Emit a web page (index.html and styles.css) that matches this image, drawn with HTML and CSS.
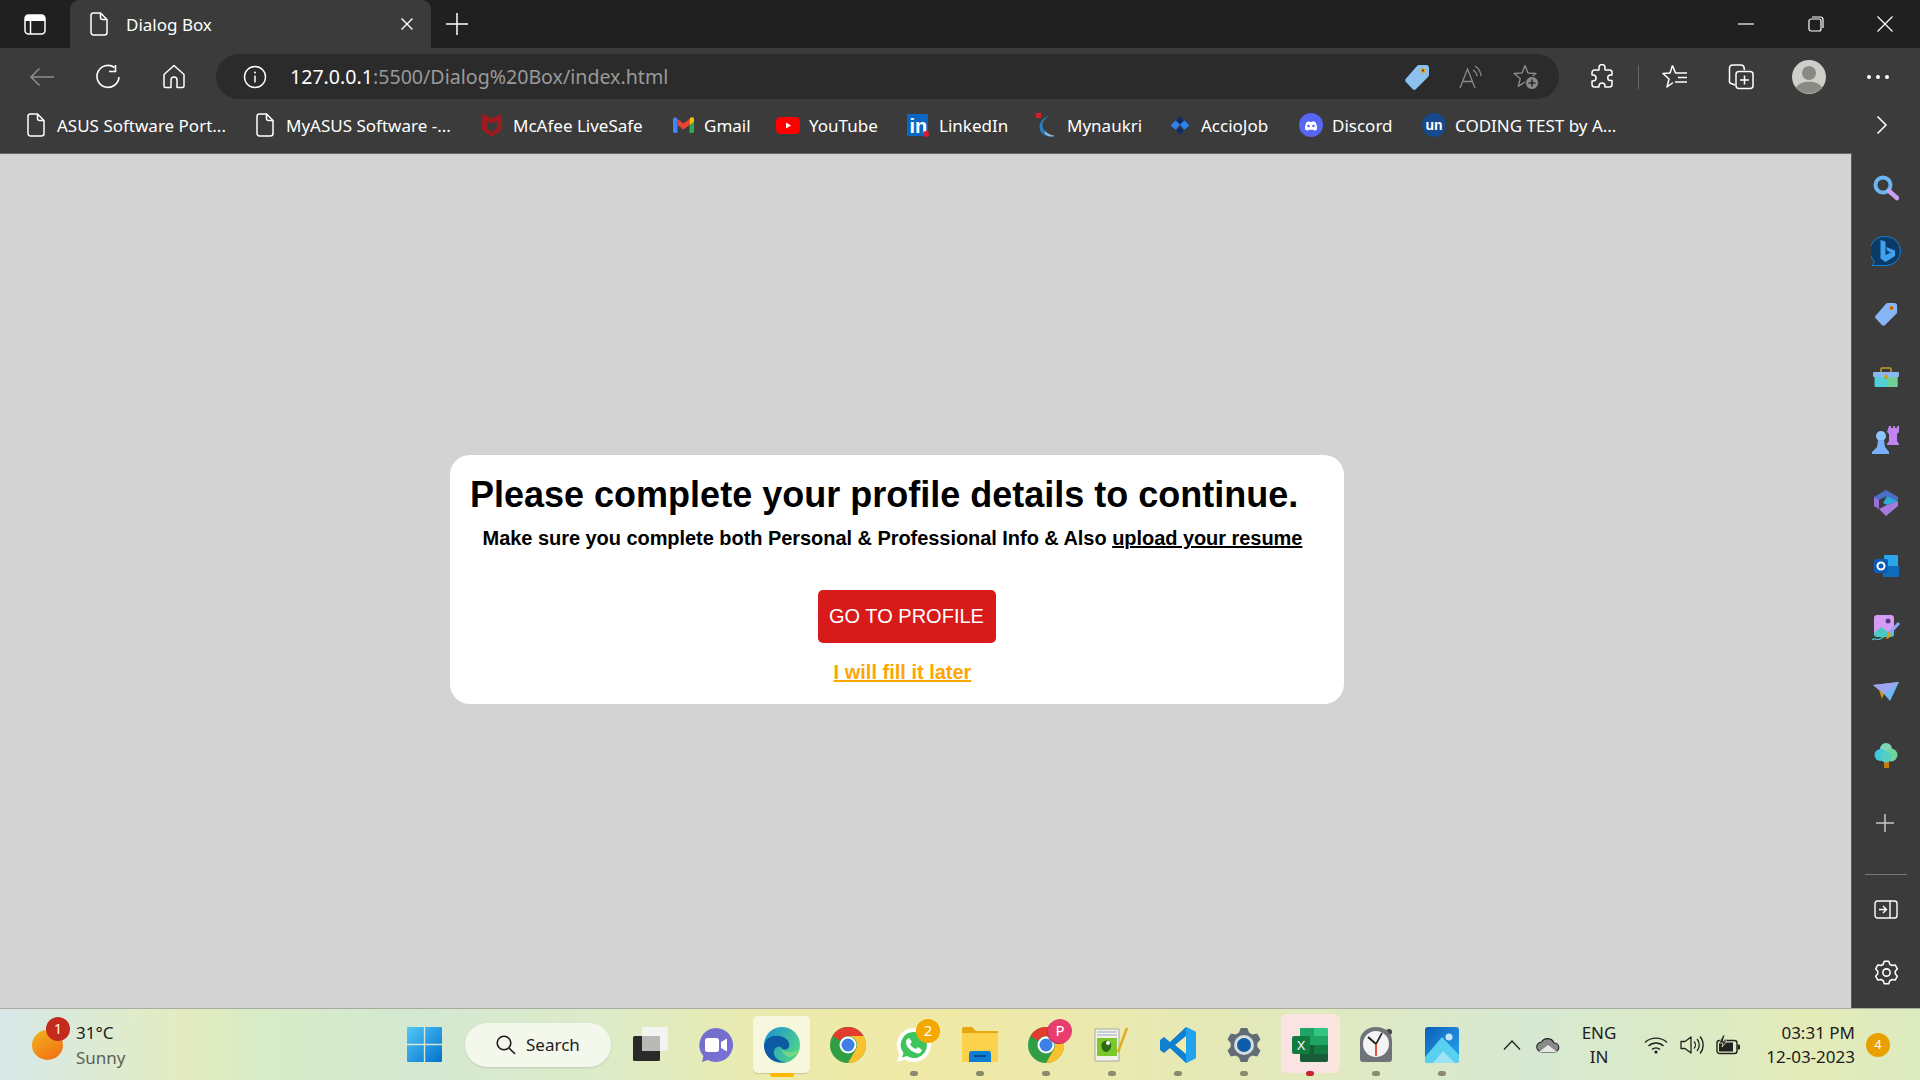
FILE: index.html
```html
<!DOCTYPE html>
<html>
<head>
    <title>Dialog Box</title>
    <meta charset="UTF-8">
    <link rel="stylesheet" href="styles.css">
</head>
<body>

<svg class="sprite">
    <symbol id="doc" viewBox="0 0 18 24"><path d="M3 1h7.5L17 7.5V20.500a2.500 2.500 0 0 1-2.500 2.500h-11A2.500 2.500 0 0 1 1 20.500v-17A2.500 2.500 0 0 1 3 1zM10.500 1v4.500a2 2 0 0 0 2 2H17" fill="none" stroke="currentColor" stroke-width="1.500"/></symbol>
    <symbol id="gear" viewBox="0 0 24 24"><polygon points="8.82,4.12 9.9,1.2 14.1,1.2 15.18,4.12 17.23,5.3 20.3,4.78 22.4,8.42 20.42,10.82 20.42,13.18 22.4,15.58 20.3,19.22 17.23,18.7 15.18,19.88 14.1,22.8 9.9,22.8 8.82,19.88 6.77,18.7 3.7,19.22 1.6,15.58 3.58,13.18 3.58,10.82 1.6,8.42 3.7,4.78 6.77,5.3"/><circle cx="12" cy="12" r="3.500"/></symbol>
    <symbol id="chrome" viewBox="0 0 36 36">
        <circle cx="18" cy="18" r="18" fill="#2f9e44"/>
        <path d="M2.400 9A18 18 0 0 1 33.600 9H18a9 9 0 0 0-7.800 4.500z" fill="#e33b2e"/>
        <path d="M33.600 9A18 18 0 0 1 18 36l7.800-13.500A9 9 0 0 0 25.800 13.500 9 9 0 0 0 18 9z" fill="#fbc02d"/>
        <circle cx="18" cy="18" r="8.500" fill="#fff"/>
        <circle cx="18" cy="18" r="6.500" fill="#3f7fe8"/>
    </symbol>
</svg>

<header class="chrome">
    <div class="tabstrip">
        <div class="tabs-btn">
            <svg width="22" height="21" viewBox="0 0 22 21"><rect x="1" y="1" width="20" height="19" rx="3.500" fill="none" stroke="#fff" stroke-width="1.500"/><path d="M1 4a3 3 0 0 1 3-3h14a3 3 0 0 1 3 3v3H1z" fill="#fff"/><path d="M6.500 7v13" stroke="#fff" stroke-width="1.500"/></svg>
        </div>
        <div class="tab">
            <svg class="tab-doc" width="18" height="24"><use href="#doc"/></svg>
            <span class="tab-title">Dialog Box</span>
            <svg class="tab-close" width="14" height="14" viewBox="0 0 14 14"><path d="M1.500 1.500l11 11M12.500 1.500l-11 11" stroke="#fff" stroke-width="1.400"/></svg>
        </div>
        <div class="new-tab">
            <svg width="22" height="22" viewBox="0 0 22 22"><path d="M11 0v22M0 11h22" stroke="#fff" stroke-width="1.500"/></svg>
        </div>
        <div class="win-btns">
            <div class="win-btn"><svg width="16" height="2" viewBox="0 0 16 2"><path d="M0 1h16" stroke="#fff" stroke-width="1.200"/></svg></div>
            <div class="win-btn"><svg width="16" height="16" viewBox="0 0 16 16"><rect x="1" y="3" width="12" height="12" rx="2" fill="none" stroke="#fff" stroke-width="1.200"/><path d="M4 1h8.500A2.500 2.500 0 0 1 15 3.500V12" fill="none" stroke="#fff" stroke-width="1.200"/></svg></div>
            <div class="win-btn"><svg width="16" height="16" viewBox="0 0 16 16"><path d="M.5.500l15 15M15.500.500l-15 15" stroke="#fff" stroke-width="1.200"/></svg></div>
        </div>
    </div>

    <div class="toolbar">
        <div class="tool dim"><svg width="26" height="20" viewBox="0 0 26 20"><path d="M25 10H2M10.500 1.500L2 10l8.500 8.500" fill="none" stroke="currentColor" stroke-width="1.500"/></svg></div>
        <div class="tool"><svg width="26" height="26" viewBox="0 0 26 26"><path d="M19.500 3.500A11 11 0 1 0 24 13" fill="none" stroke="currentColor" stroke-width="1.600"/><path d="M20.500 1v6.500H14" fill="none" stroke="currentColor" stroke-width="1.600"/></svg></div>
        <div class="tool"><svg width="24" height="25" viewBox="0 0 24 25"><path d="M12 1.500L2 10.500V22a1.500 1.500 0 0 0 1.500 1.500H9V16a3 3 0 0 1 6 0v7.500h5.500A1.500 1.500 0 0 0 22 22V10.500z" fill="none" stroke="currentColor" stroke-width="1.500" stroke-linejoin="round"/></svg></div>

        <div class="addr">
            <svg class="addr-info" width="24" height="24" viewBox="0 0 24 24"><circle cx="12" cy="12" r="10.500" fill="none" stroke="#fff" stroke-width="1.400"/><path d="M12 10.500v7" stroke="#fff" stroke-width="1.500"/><circle cx="12" cy="7.500" r="1" fill="#fff"/></svg>
            <span class="url"><b>127.0.0.1</b>:5500/Dialog%20Box/index.html</span>
            <div class="addr-icons">
                <div class="addr-icon"><svg width="24" height="26" viewBox="0 0 24 26"><path d="M14 1h7a3 3 0 0 1 3 3v7a3 3 0 0 1-1 2L11 25a2.500 2.500 0 0 1-3.500 0L1 18a2.500 2.500 0 0 1 0-3.500L12 2a3 3 0 0 1 2-1z" fill="#8cc1ee"/><circle cx="18" cy="6.500" r="2.500" fill="#e8a317"/><circle cx="18" cy="6.500" r="1" fill="#333"/></svg></div>
                <div class="addr-icon muted"><svg width="24" height="24" viewBox="0 0 24 24"><path d="M1 23L8.500 4l7.500 19M3.500 16.500h10" fill="none" stroke="currentColor" stroke-width="1.300"/><path d="M14 5a8 8 0 0 1 4 6M16 1a13 13 0 0 1 6 10" fill="none" stroke="currentColor" stroke-width="1.300"/></svg></div>
                <div class="addr-icon muted"><svg width="26" height="26" viewBox="0 0 26 26"><polygon points="12,1.500 14.940,8.950 22.940,9.450 16.760,14.550 18.760,22.300 12,18 5.240,22.300 7.240,14.550 1.060,9.450 9.060,8.950" fill="none" stroke="currentColor" stroke-width="1.400" stroke-linejoin="round"/><circle cx="19" cy="19" r="6.500" fill="#8a8a8a" stroke="#2b2b2b" stroke-width="1"/><path d="M19 15.500v7M15.500 19h7" stroke="#2b2b2b" stroke-width="1.600"/></svg></div>
            </div>
        </div>

        <div class="tool puzzle"><svg width="24" height="26" viewBox="0 0 24 26"><path d="M9 3.500a3 3 0 0 1 6 0V6h4.500A2.500 2.500 0 0 1 22 8.500V11h-1.500a2.500 2.500 0 0 0 0 5.500H22v4a2.500 2.500 0 0 1-2.500 2.500H15v-1a3 3 0 0 0-6 0v1H4.500A2.500 2.500 0 0 1 2 20.500V17h1a3 3 0 0 0 0-6H2V8.500A2.500 2.500 0 0 1 4.500 6H9z" fill="none" stroke="currentColor" stroke-width="1.500" stroke-linejoin="round"/></svg></div>
        <div class="sep"></div>
        <div class="tool"><svg width="26" height="25" viewBox="0 0 26 25"><path d="M10.500 1.500L13.500 9H25M16 13.500h9M13 18h12M11 18.500L5 23l2-8L1 9.500l7-.5 2.500-7.500" fill="none" stroke="currentColor" stroke-width="1.500" stroke-linejoin="round"/></svg></div>
        <div class="tool"><svg width="26" height="27" viewBox="0 0 26 27"><path d="M7 22L3 20.500a2.500 2.500 0 0 1-1.500-3L1.500 5A3 3 0 0 1 4.500 2H13a3 3 0 0 1 3 2.500L16.500 7" fill="none" stroke="currentColor" stroke-width="1.500"/><rect x="8" y="8.500" width="17" height="17" rx="3" fill="#3b3b3b" stroke="currentColor" stroke-width="1.500"/><path d="M16.500 12.500v9M12 17h9" stroke="currentColor" stroke-width="1.500"/></svg></div>
        <div class="tool avatar-wrap">
            <svg width="34" height="34" viewBox="0 0 34 34"><circle cx="17" cy="17" r="17" fill="#cfcec8"/><circle cx="17" cy="13" r="7" fill="#8a8a84"/><path d="M4 27.500a14 9 0 0 1 26 0A17 17 0 0 1 4 27.500z" fill="#8a8a84"/></svg>
        </div>
        <div class="tool dots"><span></span><span></span><span></span></div>
    </div>

    <div class="bookmarks">
        <div class="bm"><span class="bm-icon"><svg width="18" height="24"><use href="#doc"/></svg></span>ASUS Software Port...</div>
        <div class="bm"><span class="bm-icon"><svg width="18" height="24"><use href="#doc"/></svg></span>MyASUS Software -...</div>
        <div class="bm"><span class="bm-icon"><svg width="22" height="24" viewBox="0 0 22 24"><path d="M1 1l10 4 10-4v16l-10 7-10-7z" fill="#9c1b1f"/><path d="M6 8.500l5 2 5-2v7l-5 3.500-5-3.500z" fill="#3b3b3b"/></svg></span>McAfee LiveSafe</div>
        <div class="bm"><span class="bm-icon"><svg width="21" height="16" viewBox="0 0 21 16"><path d="M0 2.500A2 2 0 0 1 3.500 1L4.500 2v14H1.500A1.500 1.500 0 0 1 0 14.500z" fill="#4285f4"/><path d="M21 2.500A2 2 0 0 0 17.500 1l-1 1v14h3a1.500 1.500 0 0 0 1.500-1.500z" fill="#34a853"/><path d="M16.500 2v6l4.500-3.500v-2A2 2 0 0 0 17.500 1z" fill="#fbbc04"/><path d="M4.500 2L10.500 6.500 16.500 2v6l-6 4.500-6-4.500z" fill="#ea4335"/></svg></span>Gmail</div>
        <div class="bm"><span class="bm-icon"><svg width="24" height="17" viewBox="0 0 24 17"><rect width="24" height="17" rx="4.500" fill="#f00"/><path d="M10 5.500v6l5-3z" fill="#fff"/></svg></span>YouTube</div>
        <div class="bm"><span class="bm-icon"><svg width="22" height="23" viewBox="0 0 22 23"><rect width="21" height="22" fill="#0a66c2"/><text class="li-text" x="2.500" y="19">in</text><circle cx="19" cy="20" r="3" fill="#d3202a"/></svg></span>LinkedIn</div>
        <div class="bm"><span class="bm-icon"><svg width="22" height="24" viewBox="0 0 22 24"><path d="M15 2C8 6 5 13 10 18c3 3 6 4 10 5-7 2-13-1-15-6C3 11 8 4 15 2z" fill="#2a7fc0"/><path d="M10 18c3 3 6 4 10 5-4 1-7 .5-10-2z" fill="#9fb6c8"/><rect x="1" y="0" width="5" height="5" fill="#d3202a"/></svg></span>Mynaukri</div>
        <div class="bm"><span class="bm-icon"><svg width="22" height="19" viewBox="0 0 22 22"><path d="M11 0l4.500 5L11 10 6.500 5z" fill="#0c2c66"/><path d="M6 5l5 5-5 6-6-5z" fill="#2f80ed"/><path d="M16 5l6 6-6 5-5-6z" fill="#2f80ed"/><path d="M11 12l4 5-4 5-4-5z" fill="#0c2c66"/></svg></span>AccioJob</div>
        <div class="bm"><span class="bm-icon"><svg width="24" height="24" viewBox="0 0 24 24"><circle cx="12" cy="12" r="12" fill="#5865f2"/><path d="M6 16.500c-.3-3 .5-5.500 1.800-7.500 1-.5 2-.8 2.700-.8l.4.800h2.200l.4-.8c.7 0 1.700.3 2.700.8 1.300 2 2.100 4.500 1.800 7.500-1 .7-2 1.100-2.800 1.300l-.7-1.100h-4.900l-.7 1.100C8 17.600 7 17.200 6 16.500z" fill="#fff"/><circle cx="9.500" cy="13" r="1.300" fill="#5865f2"/><circle cx="14.500" cy="13" r="1.300" fill="#5865f2"/></svg></span>Discord</div>
        <div class="bm"><span class="bm-icon"><svg width="24" height="24" viewBox="0 0 24 24"><circle cx="12" cy="12" r="12" fill="#174a8c"/><text class="un-text" x="12" y="17" text-anchor="middle">un</text></svg></span>CODING TEST by A...</div>
        <div class="bm-more"><svg width="12" height="20" viewBox="0 0 12 20"><path d="M1.500 1.500L10 10l-8.500 8.500" fill="none" stroke="#fff" stroke-width="1.500"/></svg></div>
    </div>
</header>

<div class="middle">
    <main class="page">
        <div class="dialog">
            <h1>Please complete your profile details to continue.</h1>
            <p class="dialog-sub">Make sure you complete both Personal &amp; Professional Info &amp; Also <a href="#">upload your resume</a></p>
            <div class="dialog-actions">
                <button class="profile-btn">GO TO PROFILE</button>
            </div>
            <a class="later" href="#">I will fill it later</a>
        </div>
    </main>

    <aside class="sidebar">
        <div class="side-item"><svg width="26" height="26" viewBox="0 0 26 26"><circle cx="10" cy="10" r="7.500" fill="none" stroke="#6db5f0" stroke-width="4"/><path d="M16 16l8 7" stroke="#c9a2ef" stroke-width="4.500" stroke-linecap="round"/></svg></div>
        <div class="side-item"><svg width="30" height="30" viewBox="0 0 30 30"><path d="M15 .500a14.500 14.500 0 1 1 0 29H1l2.500-4A14.500 14.500 0 0 1 15 .500z" fill="#0b3a66" stroke="#1580d8" stroke-width="1"/><path d="M9.500 4l5 1.500V19l5.500-2.500-3.500-1.500-1.500-4 9 3.500v5.500L14.500 26l-5-3.500z" fill="#3da3f0"/></svg></div>
        <div class="side-item"><svg width="24" height="24" viewBox="0 0 24 26"><path d="M14 1h7a3 3 0 0 1 3 3v7a3 3 0 0 1-1 2L11 25a2.500 2.500 0 0 1-3.500 0L1 18a2.500 2.500 0 0 1 0-3.500L12 2a3 3 0 0 1 2-1z" fill="#86b6f5"/><circle cx="18" cy="6.500" r="2.500" fill="#e8930c"/><circle cx="18" cy="6.500" r="1" fill="#333"/></svg></div>
        <div class="side-item"><svg width="26" height="20" viewBox="0 0 26 20"><path d="M8 5V2a1 1 0 0 1 1-1h8a1 1 0 0 1 1 1v3" fill="none" stroke="#c39a2a" stroke-width="1.500"/><rect x="1.500" y="7" width="23" height="13" rx="1" fill="#52cfd6"/><rect x="14" y="10" width="10.500" height="10" fill="#6fcf97"/><rect y="5" width="26" height="5" rx="1" fill="#8ab8f0"/><rect x="11.500" y="8" width="3" height="4" fill="#d59a10"/></svg></div>
        <div class="side-item"><svg width="28" height="30" viewBox="0 0 28 30"><path d="M17 1h2v2h2V1h2v2h2V1h2v6l-2 2v7l2 3v1H15v-1l2-3V9l-2-2z" fill="#c084f0"/><circle cx="9" cy="11" r="5" fill="#8ec5fc"/><path d="M6 15h6l1 7 4 5v2H0v-2l5-5z" fill="#7ab0fa"/></svg></div>
        <div class="side-item"><svg width="24" height="26" viewBox="0 0 24 26"><path d="M12 0L24 7v4L13 6 5 10v9L0 16V7z" fill="#4a6fc8"/><path d="M0 7l5 3v9l-5-3z" fill="#9b6fd8"/><path d="M5 19l8-4 11-4v5l-12 10z" fill="#a678e0"/><path d="M13 6l11 5-11 4-4-2z" fill="#2ea8d8"/></svg></div>
        <div class="side-item"><svg width="25" height="24" viewBox="0 0 25 24"><rect x="10" y="1" width="14" height="14" rx="1" fill="#28a8ea"/><path d="M8 12h17v10a1 1 0 0 1-1 1H9z" fill="#0f6cbd"/><rect y="5" width="14" height="14" rx="1.500" fill="#0a5cb5"/><circle cx="7" cy="12" r="3.500" fill="none" stroke="#fff" stroke-width="2"/></svg></div>
        <div class="side-item"><svg width="28" height="28" viewBox="0 0 28 28"><rect x="2" y="0" width="20" height="21" rx="3" fill="#d69cf5"/><path d="M2 18l7-6 7 5 6-3v5a3 3 0 0 1-3 3H5a3 3 0 0 1-3-3z" fill="#49c9c0"/><circle cx="16" cy="6" r="2.500" fill="#5b3a85"/><path d="M26 7l2 2-9 10-3-2z" fill="#8fa4f5"/><path d="M16 17l3 2-2 4-3 1z" fill="#e39a20"/><path d="M0 25c3-3 5 1 8-1s2-2 4-1" fill="none" stroke="#49c9c0" stroke-width="1.200"/></svg></div>
        <div class="side-item"><svg width="26" height="20" viewBox="0 0 26 20"><path d="M0 3l26-3-9 19-6-7z" fill="#6db7f5"/><path d="M0 3l26-3-15 12z" fill="#9da5ee"/><path d="M0 3l11 9-2 5-3-9z" fill="#d5930f"/></svg></div>
        <div class="side-item"><svg width="24" height="26" viewBox="0 0 24 26"><rect x="10" y="19" width="5" height="7" fill="#c77a12"/><circle cx="12" cy="7" r="6" fill="#7fd8b8"/><circle cx="6.500" cy="13" r="6" fill="#3fc9dc"/><circle cx="17" cy="13" r="6.500" fill="#6fd49b"/><circle cx="12" cy="15" r="5.500" fill="#55cfc2"/></svg></div>
        <div class="side-item side-plus"><svg width="18" height="18" viewBox="0 0 18 18"><path d="M9 0v18M0 9h18" stroke="#c8c8c8" stroke-width="1.500"/></svg></div>
        <div class="side-bottom">
            <div class="side-line"></div>
            <div class="side-item"><svg width="24" height="19" viewBox="0 0 24 19"><rect x="1" y="1" width="22" height="17" rx="2.500" fill="none" stroke="#fff" stroke-width="1.400"/><path d="M16 1v17" stroke="#fff" stroke-width="1.400"/><path d="M5 9.500h7M9 6l3.500 3.500L9 13" fill="none" stroke="#fff" stroke-width="1.400"/></svg></div>
            <div class="side-item"><svg class="side-gear" width="25" height="25"><use href="#gear"/></svg></div>
        </div>
    </aside>
</div>

<footer class="taskbar">
    <div class="weather">
        <span class="sun"></span>
        <span class="weather-badge">1</span>
        <div class="weather-text">
            <span>31°C</span>
            <span class="weather-sub">Sunny</span>
        </div>
    </div>

    <div class="apps">
        <div class="app">
            <svg width="35" height="35" viewBox="0 0 35 35"><defs><linearGradient id="winA" x1="0" y1="0" x2="1" y2="1"><stop offset="0" stop-color="#52c8f8"/><stop offset="1" stop-color="#0470cc"/></linearGradient></defs><path d="M0 1a1 1 0 0 1 1-1h15.800v16.800H0zM18.200 0H34a1 1 0 0 1 1 1v15.800H18.200zM0 18.200h16.800V35H1a1 1 0 0 1-1-1zM18.200 18.200H35V34a1 1 0 0 1-1 1H18.200z" fill="url(#winA)"/></svg>
        </div>
        <div class="search">
            <svg width="20" height="20" viewBox="0 0 20 20"><circle cx="8" cy="8" r="6.800" fill="none" stroke="#1a1a1a" stroke-width="1.600"/><path d="M13 13l6 6" stroke="#1a1a1a" stroke-width="1.600"/></svg>
            <span>Search</span>
        </div>
        <div class="app">
            <svg width="35" height="35" viewBox="0 0 35 35"><rect x="0" y="9" width="27" height="25" rx="1.500" fill="#2a2a2a"/><rect x="9" y="0" width="26" height="24" rx="1" fill="#f3f3f0"/><rect x="9" y="9" width="18" height="15" fill="#b9b9b6"/></svg>
        </div>
        <div class="app">
            <svg width="36" height="36" viewBox="0 0 36 36"><defs><linearGradient id="teamsA" x1="0" y1="0" x2="1" y2="1"><stop offset="0" stop-color="#6f70c8"/><stop offset="1" stop-color="#7b6fd8"/></linearGradient></defs><path d="M18 1a17 17 0 1 1-8 32l-6 2 1.500-6A17 17 0 0 1 18 1z" fill="url(#teamsA)"/><rect x="7" y="11" width="14" height="14" rx="2.500" fill="#fff"/><path d="M23 15l6-3.500v13L23 21z" fill="#fff"/></svg>
        </div>
        <div class="app app-active">
            <svg width="36" height="36" viewBox="0 0 36 36"><defs><linearGradient id="edgeA" x1="0" y1="0" x2="1" y2=".6"><stop offset="0" stop-color="#1a8fd8"/><stop offset="1" stop-color="#4fd28a"/></linearGradient></defs><circle cx="18" cy="18" r="18" fill="url(#edgeA)"/><path d="M0 18C2 9 12 7 19 10c7 3 8 10 4 12-3 1.500-6 0-6-2-6-2-10 5-5 11 3 3 7 4 10 4C8 37 0 29 0 18z" fill="#0c59a4"/><path d="M36 20c0 3-4 5-9 5-6 0-10-3-10-5 0 5 4 9 8 10 6-1 11-5 11-10z" fill="#b5e86a" opacity=".4"/></svg>
            <span class="bar"></span>
        </div>
        <div class="app"><svg width="36" height="36"><use href="#chrome"/></svg></div>
        <div class="app">
            <svg width="36" height="36" viewBox="0 0 36 36"><path d="M18 1a17 17 0 1 1-9 31.500L1 35l2.500-8A17 17 0 0 1 18 1z" fill="#fff"/><path d="M18 5a13 13 0 1 1-7 24l-5 1.500L7.500 26A13 13 0 0 1 18 5z" fill="#3fc45c"/><path d="M13 11l3 4-2 2c1 2 3 4 6 5l2-2 4 3c-1 3-3 4-6 3-6-2-10-7-10-11 0-2 1-3 3-4z" fill="#fff"/></svg>
            <span class="badge badge-orange">2</span>
            <span class="dot"></span>
        </div>
        <div class="app">
            <svg width="36" height="35" viewBox="0 0 36 35"><path d="M0 2a2 2 0 0 1 2-2h8l4 4h22v31H0z" fill="#e8a80c"/><path d="M0 6h36v29H0z" fill="#fcd14c"/><path d="M7 35V27a3 3 0 0 1 3-3h16a3 3 0 0 1 3 3v8z" fill="#0d7ed4"/><rect x="12" y="28" width="12" height="2" fill="#0a4e90"/></svg>
            <span class="dot"></span>
        </div>
        <div class="app">
            <svg width="36" height="36"><use href="#chrome"/></svg>
            <span class="badge badge-pink">P</span>
            <span class="dot"></span>
        </div>
        <div class="app">
            <svg width="36" height="36" viewBox="0 0 36 36"><path d="M1 2h24v32H1z" fill="#f2f2ea" stroke="#999" stroke-width=".8"/><rect x="3" y="11" width="20" height="18" fill="#7cc82c"/><path d="M8 16c3-4 8-3 9 1s-2 8-5 8-6-5-4-9z" fill="#2a6a12"/><circle cx="14" cy="16" r="2" fill="#fff"/><path d="M24 25L33 1" stroke="#e4a81c" stroke-width="2.400"/><path d="M3 5h20M3 8h20" stroke="#9ab" stroke-width="1"/></svg>
            <span class="dot"></span>
        </div>
        <div class="app">
            <svg width="36" height="36" viewBox="0 0 36 36"><path d="M26 0l10 5v26l-10 5L10 21l-6 5-4-3v-10l4-3 6 5z" fill="#0f7fcf"/><path d="M26 0l10 5v26l-10 5z" fill="#22a3ef"/><path d="M26 9L15 18l11 9z" fill="#f0eca8"/></svg>
            <span class="dot"></span>
        </div>
        <div class="app">
            <svg class="set-gear" width="38" height="38"><use href="#gear"/></svg>
            <span class="set-core"></span>
            <span class="dot"></span>
        </div>
        <div class="app app-open">
            <svg width="36" height="34" viewBox="0 0 36 34"><path d="M8 0h26a2 2 0 0 1 2 2v30a2 2 0 0 1-2 2H10a2 2 0 0 1-2-2z" fill="#21a366"/><path d="M22 0h12a2 2 0 0 1 2 2v6H22z" fill="#33c481"/><path d="M22 17h14v9H22z" fill="#107c41"/><path d="M8 17h14v9H8z" fill="#185c37"/><path d="M8 26h28v6a2 2 0 0 1-2 2H10a2 2 0 0 1-2-2z" fill="#185c37"/><rect y="8" width="18" height="18" rx="2" fill="#107c41"/><text class="xl-text" x="9" y="22" text-anchor="middle">X</text></svg>
            <span class="dot dot-red"></span>
        </div>
        <div class="app">
            <svg width="36" height="36" viewBox="0 0 36 36"><circle cx="31" cy="5" r="3" fill="#444"/><path d="M2 14a16 14 0 0 1 32 0v18a3 3 0 0 1-3 3H5a3 3 0 0 1-3-3z" fill="#6d7378"/><circle cx="18" cy="17" r="13" fill="#f4f4f4"/><path d="M18 17L10 10" stroke="#222" stroke-width="2"/><path d="M18 17l6-11" stroke="#222" stroke-width="1.600"/><path d="M18 17v12" stroke="#d9442a" stroke-width="1.800"/></svg>
            <span class="dot"></span>
        </div>
        <div class="app">
            <svg width="34" height="36" viewBox="0 0 34 36"><defs><linearGradient id="photoA" x1="0" y1="0" x2="1" y2="1"><stop offset="0" stop-color="#0c5fb8"/><stop offset="1" stop-color="#2aa6f0"/></linearGradient></defs><rect width="34" height="36" rx="3" fill="url(#photoA)"/><circle cx="24" cy="10" r="3.500" fill="#bfe4fb"/><path d="M0 30L17 10l17 18v5a3 3 0 0 1-3 3H3a3 3 0 0 1-3-3z" fill="#58d0f0"/><path d="M8 36l10-12 12 12z" fill="#9ce4f5"/></svg>
            <span class="dot"></span>
        </div>
    </div>

    <div class="tray">
        <svg class="tray-up" width="18" height="10" viewBox="0 0 18 10"><path d="M1 9.500L9 1l8 8.500" fill="none" stroke="#222" stroke-width="1.300"/></svg>
        <svg class="tray-cloud" width="24" height="16" viewBox="0 0 24 16"><path d="M6 15a5 5 0 0 1-.5-10A7 7 0 0 1 18 6a4.500 4.500 0 0 1 .5 9z" fill="#8a8a88" stroke="#222" stroke-width="1.100"/><path d="M3 15l9-7 9 7z" fill="#e8e8e6"/></svg>
        <div class="lang"><span>ENG</span><span>IN</span></div>
        <svg class="tray-wifi" width="24" height="18" viewBox="0 0 24 18"><path d="M1 6.500a16 16 0 0 1 22 0M4.500 10a11 11 0 0 1 15 0M8 13.500a6 6 0 0 1 8 0" fill="none" stroke="#222" stroke-width="1.400"/><circle cx="12" cy="16" r="1.600" fill="#222"/></svg>
        <svg class="tray-vol" width="24" height="20" viewBox="0 0 24 20"><path d="M1 6.500h4L11 2v16l-6-4.500H1z" fill="none" stroke="#222" stroke-width="1.300" stroke-linejoin="round"/><path d="M14 6.500a5 5 0 0 1 0 7M17 4a9 9 0 0 1 0 12M20 1.500a13 13 0 0 1 0 17" fill="none" stroke="#222" stroke-width="1.300"/></svg>
        <svg class="tray-bat" width="24" height="20" viewBox="0 0 24 20"><rect x="1" y="5.500" width="20" height="13" rx="2.500" fill="none" stroke="#222" stroke-width="1.400"/><rect x="3" y="7.500" width="14" height="9" fill="#222"/><rect x="21.500" y="9.500" width="2.500" height="5" rx="1" fill="#222"/><path d="M7 0L3 8h4l-1 4 5-6H7l2-6z" fill="#222" stroke="#e0ebc8" stroke-width=".8"/></svg>
        <div class="clock"><span>03:31 PM</span><span>12-03-2023</span></div>
        <span class="notify">4</span>
    </div>
</footer>

</body>
</html>
```

FILE: styles.css
```css
*{
    box-sizing: border-box;
}

html,
body{
    height: 100%;
}

body{
    margin: 0;
    display: flex;
    flex-direction: column;
    overflow: hidden;
    font-family: "Noto Sans", "Open Sans", Arial, sans-serif;
    background-color: #d3d3d3;
}

.sprite{
    position: absolute;
    width: 0;
    height: 0;
}

svg{
    display: block;
    flex: none;
}

/* browser chrome */

.chrome{
    flex: none;
    color: #fff;
    background-color: #3b3b3b;
}

.tabstrip{
    display: flex;
    align-items: stretch;
    height: 48px;
    background-color: #202020;
}

.tabs-btn{
    display: flex;
    align-items: center;
    justify-content: center;
    width: 70px;
}

.tab{
    display: flex;
    align-items: center;
    width: 361px;
    padding: 0 17px 0 20px;
    background-color: #3b3b3b;
    border-radius: 9px 9px 0 0;
}

.tab-title{
    margin-left: 18px;
    font-size: 17px;
}

.tab-close{
    margin-left: auto;
}

.new-tab{
    display: flex;
    align-items: center;
    padding-left: 15px;
}

.win-btns{
    display: flex;
    margin-left: auto;
}

.win-btn{
    display: flex;
    align-items: center;
    justify-content: center;
    width: 69.500px;
}

.toolbar{
    display: flex;
    align-items: center;
    height: 51px;
    padding: 6px 0 0 9px;
}

.tool{
    display: flex;
    align-items: center;
    justify-content: center;
    width: 66px;
    height: 45px;
}

.dim{
    color: #8d8d8d;
}

.addr{
    display: flex;
    align-items: center;
    width: 1343px;
    height: 45px;
    margin-left: 9px;
    padding: 0 6px 0 27px;
    background-color: #2b2b2b;
    border-radius: 23px;
}

.url{
    margin-left: 23px;
    font-size: 19.600px;
    color: #9a9a9a;
}

.url b{
    font-weight: 400;
    color: #fff;
}

.addr-icons{
    display: flex;
    margin-left: auto;
}

.addr-icon{
    display: flex;
    align-items: center;
    justify-content: center;
    width: 54.500px;
}

.muted{
    color: #8a8a8a;
}

.puzzle{
    margin-left: 10px;
}

.sep{
    width: 1px;
    height: 24px;
    margin: 0 3px;
    background-color: #666;
}

.avatar-wrap{
    width: 70px;
}

.dots{
    gap: 5px;
    width: 68px;
}

.dots span{
    width: 4px;
    height: 4px;
    border-radius: 50%;
    background-color: #fff;
}

.bookmarks{
    display: grid;
    grid-template-columns: 229px 227px 191px 105px 130px 128px 134px 131px 123px 240px 1fr;
    align-items: center;
    height: 55px;
    padding: 0 32px 2px 24px;
    border-bottom: 1px solid #666;
    font-size: 17px;
}

.bm{
    display: flex;
    align-items: center;
    gap: 9px;
    white-space: nowrap;
}

.bm-icon{
    display: flex;
    align-items: center;
    justify-content: center;
    width: 24px;
    height: 26px;
}

.li-text{
    font-family: "Liberation Sans", Arial, sans-serif;
    font-weight: 700;
    font-size: 20px;
    fill: #fff;
}

.un-text{
    font-family: "Liberation Sans", Arial, sans-serif;
    font-weight: 700;
    font-size: 14px;
    fill: #fff;
}

.bm-more{
    justify-self: end;
}

/* page */

.middle{
    flex: 1;
    display: flex;
    min-height: 0;
}

.page{
    flex: 1;
    padding: 301px 0 0 450px;
    background-color: #d3d3d3;
}

.dialog{
    width: 894px;
    height: 249px;
    padding-top: 18px;
    text-align: center;
    background-color: #fff;
    border-radius: 20px;
    font-family: "Liberation Sans", Arial, sans-serif;
}

.dialog h1{
    margin: 0;
    padding-left: 20px;
    font-size: 36px;
    line-height: 44px;
    text-align: left;
    white-space: nowrap;
}

.dialog-sub{
    margin: 10px 9px 0 0;
    font-size: 20px;
    line-height: 23px;
    font-weight: 700;
    letter-spacing: -.05px;
}

.dialog-sub a{
    color: #000;
}

.dialog-actions{
    padding: 40px 0 0 19px;
}

.profile-btn{
    width: 178px;
    height: 53px;
    padding: 0;
    color: #fff;
    font-family: inherit;
    font-size: 20px;
    background-color: #d71a1a;
    border: 0;
    border-radius: 5px;
}

.later{
    display: inline-block;
    margin: 18px 0 0 11px;
    font-size: 20px;
    line-height: 23px;
    font-weight: 700;
    color: #ffa500;
}

/* edge sidebar */

.sidebar{
    flex: none;
    display: flex;
    flex-direction: column;
    width: 69px;
    margin-top: -1px;
    padding: 3px 0 4px;
    background-color: #3b3b3b;
    border-left: 1px solid #5a5a5a;
}

.side-item{
    display: flex;
    align-items: center;
    justify-content: center;
    height: 63px;
}

.side-plus{
    margin-top: 5px;
    padding-right: 3px;
}

.side-bottom{
    margin-top: auto;
}

.side-line{
    width: 42px;
    height: 1px;
    margin: 0 auto 3px;
    background-color: #777;
}

.side-gear{
    fill: none;
    stroke: #fff;
    stroke-width: 1.500;
    stroke-linejoin: round;
}

/* windows taskbar */

.taskbar{
    flex: none;
    display: flex;
    align-items: center;
    height: 72px;
    color: #1c1c1c;
    border-top: 1px solid #a9aba3;
    background: linear-gradient(90deg, #d8e8ea 0, #dcebd4 90px, #e4ecbe 190px, #d6ebc6 260px, #d4e8d2 420px, #dcebc8 600px, #ecebac 780px, #f0e9a6 950px, #e8e9b2 1150px, #dfe9c2 1350px, #d6e8d2 1530px, #dcebc4 1700px, #e4ebb8 1810px, #dcebc0 1920px);
}

.weather{
    position: relative;
    display: flex;
    align-items: center;
    width: 391px;
    height: 100%;
    padding-left: 32px;
}

.sun{
    width: 31px;
    height: 30px;
    border-radius: 50%;
    background: linear-gradient(145deg, #f2b41e, #f26a12);
}

.weather-badge{
    position: absolute;
    left: 46px;
    top: 8px;
    width: 24px;
    height: 24px;
    color: #fff;
    font-size: 14px;
    line-height: 23px;
    text-align: center;
    background-color: #c42b1c;
    border-radius: 50%;
}

.weather-text{
    display: flex;
    flex-direction: column;
    margin-left: 13px;
    font-size: 17px;
    line-height: 25px;
}

.weather-sub{
    color: #5c5f58;
}

.apps{
    display: flex;
    align-items: center;
    height: 100%;
}

.app{
    position: relative;
    display: flex;
    align-items: center;
    justify-content: center;
    width: 66px;
    height: 100%;
}

.search{
    display: flex;
    align-items: center;
    gap: 10px;
    width: 146px;
    height: 44px;
    margin: 0 6px 0 8px;
    padding-left: 31px;
    font-size: 17px;
    background-color: #f4f8ec;
    border-radius: 22px;
    box-shadow: 0 1px 2px rgba(0, 0, 0, .12);
}

.app-active::before{
    content: "";
    position: absolute;
    left: 4px;
    top: 7px;
    width: 57px;
    height: 57px;
    background-color: rgba(255, 255, 255, .6);
    border-radius: 5px;
    box-shadow: 0 1px 1px rgba(0, 0, 0, .15);
}

.app-active svg{
    position: relative;
}

.bar{
    position: absolute;
    left: 21px;
    bottom: 3px;
    width: 24px;
    height: 4px;
    background-color: #ffb900;
    border-radius: 2px;
}

.dot{
    position: absolute;
    left: 29px;
    bottom: 4px;
    width: 8px;
    height: 5px;
    background-color: #8a8a6e;
    border-radius: 3px;
}

.dot-red{
    background-color: #c8242c;
}

.app-open::before{
    content: "";
    position: absolute;
    left: 4px;
    top: 5px;
    width: 59px;
    height: 59px;
    background-color: #fbe6dc;
    border-radius: 6px;
}

.app-open::after{
    content: "";
    position: absolute;
    left: 4px;
    top: 5px;
    width: 50px;
    height: 59px;
    background-color: #fce3e3;
    border-radius: 6px;
}

.app-open svg{
    position: relative;
    z-index: 1;
}

.app-open .dot{
    z-index: 1;
}

.xl-text{
    font-family: "Liberation Sans", Arial, sans-serif;
    font-size: 13px;
    fill: #fff;
}

.badge{
    position: absolute;
    top: 10px;
    left: 35px;
    width: 24px;
    height: 24px;
    color: #fff;
    font-size: 15px;
    line-height: 23px;
    text-align: center;
    border-radius: 50%;
}

.badge-orange{
    background-color: #f5a800;
}

.badge-pink{
    background-color: #e83e6f;
    box-shadow: -1px 1px 0 #c22a58;
}

.set-gear{
    fill: #626c76;
}

.set-core{
    position: absolute;
    left: 23px;
    top: 26px;
    width: 20px;
    height: 20px;
    background-color: #0f5ca8;
    border: 3px solid #d5dde0;
    border-radius: 50%;
}

.tray{
    flex: 1;
    display: flex;
    align-items: center;
    height: 100%;
    padding-left: 28px;
}

.tray-up{
    margin-right: 15px;
}

.tray-cloud{
    margin-right: 13px;
}

.lang{
    display: flex;
    flex-direction: column;
    align-items: center;
    width: 52px;
    margin-right: 19px;
    font-size: 17px;
    line-height: 24px;
}

.tray-wifi{
    margin-right: 12px;
}

.tray-vol{
    margin-right: 12px;
}

.tray-bat{
    margin-right: 15px;
}

.clock{
    display: flex;
    flex-direction: column;
    align-items: flex-end;
    width: 100px;
    font-size: 17px;
    line-height: 24px;
}

.notify{
    width: 24px;
    height: 24px;
    margin-left: 11px;
    color: #fff;
    font-size: 13px;
    line-height: 23px;
    text-align: center;
    background-color: #e8a000;
    border-radius: 50%;
}
```
